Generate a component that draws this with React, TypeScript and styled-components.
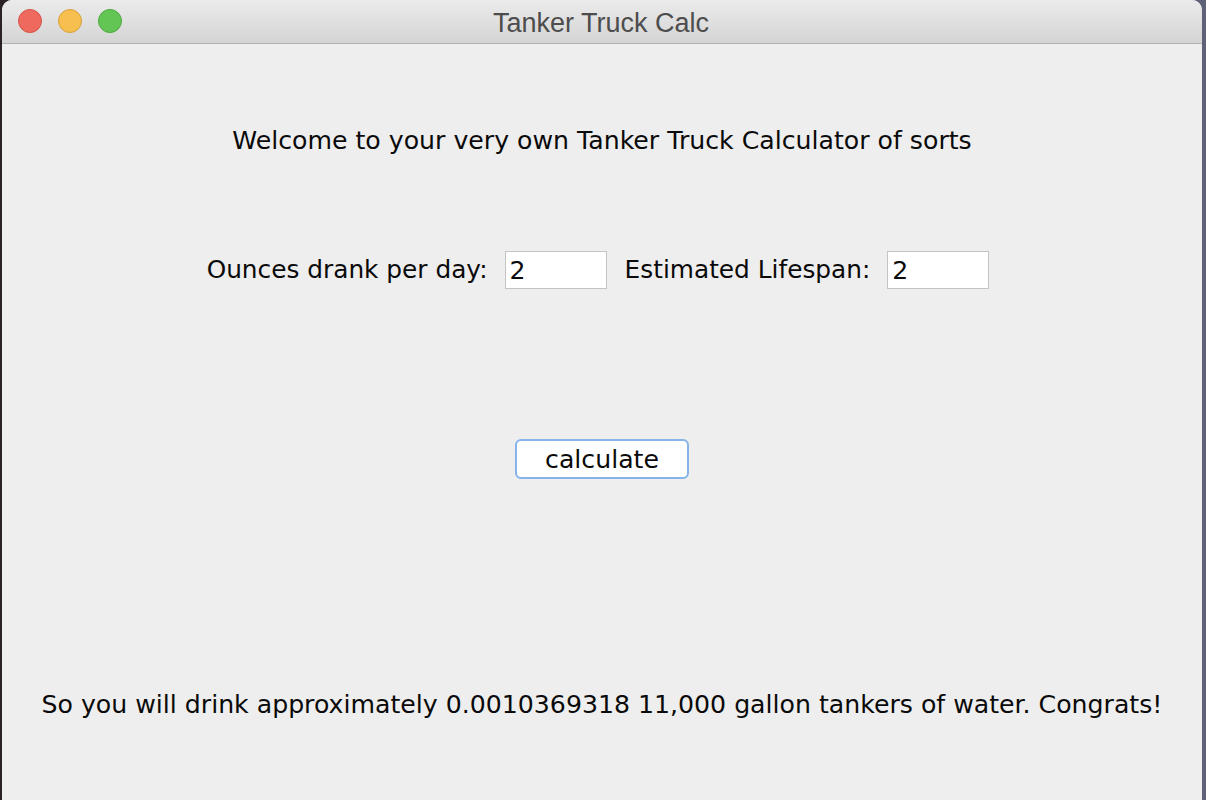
import React from "react";
import styled, { createGlobalStyle } from "styled-components";

const GlobalStyle = createGlobalStyle`
  html, body {
    margin: 0;
    padding: 0;
    height: 100%;
    overflow: hidden;
  }
  body {
    background: linear-gradient(90deg, #2a2226 0, #2a2226 50%, #5f6179 50%);
    font-family: "DejaVu Sans", "Noto Sans", sans-serif;
  }
`;

const Desktop = styled.div`
  height: 800px;
  display: flex;
  padding: 0 4px 0 2px;
`;

const Window = styled.div`
  flex: 1;
  display: flex;
  flex-direction: column;
  background: #eeeeee;
  border-radius: 10px 10px 0 0;
  overflow: hidden;
`;

const TitleBar = styled.div`
  height: 43px;
  flex-shrink: 0;
  position: relative;
  display: flex;
  align-items: center;
  justify-content: center;
  background: linear-gradient(#ebebeb, #d4d4d4);
  border-bottom: 1px solid #b1b1b1;
`;

const Lights = styled.div`
  position: absolute;
  left: 16px;
  top: 9px;
  display: flex;
  gap: 16px;
`;

const Light = styled.span<{ $fill: string; $edge: string }>`
  width: 22px;
  height: 22px;
  border-radius: 50%;
  background: ${(p) => p.$fill};
  border: 1px solid ${(p) => p.$edge};
`;

const Title = styled.div`
  font-size: 27px;
  color: #4d4d4d;
  font-family: "Liberation Sans", "Noto Sans", sans-serif;
  margin: 3px 2px 0 0;
`;

const Body = styled.div`
  flex: 1;
  display: flex;
  flex-direction: column;
  align-items: center;
  color: #0a0a0a;
  font-size: 25.2px;
`;

const Heading = styled.div`
  line-height: 30px;
  margin-top: 82px;
`;

const Row = styled.div`
  margin: 95px 8px 0 0;
  height: 38px;
  display: flex;
  align-items: center;
`;

const Label = styled.label`
  font-size: 24.8px;
  line-height: 30px;
  margin-right: 17px;
`;

const Field = styled.input`
  box-sizing: border-box;
  width: 102px;
  height: 38px;
  margin-right: 18px;
  padding: 0 4px;
  border: 1px solid #c4c4c4;
  background: #ffffff;
  font: inherit;
  color: #0a0a0a;
  outline: none;

  &:last-child {
    margin-right: 0;
  }
`;

const Button = styled.button`
  margin-top: 150px;
  box-sizing: border-box;
  width: 174px;
  height: 40px;
  border: 2px solid #84b4ea;
  border-radius: 6px;
  background: #ffffff;
  font: inherit;
  color: #0a0a0a;
  padding: 0;
`;

const Result = styled.div`
  margin-top: 211px;
  line-height: 30px;
`;

export default function App() {
  return (
    <>
      <GlobalStyle />
      <Desktop>
        <Window>
          <TitleBar>
            <Lights>
              <Light $fill="#ee6a5f" $edge="#d4534a" />
              <Light $fill="#f6bf4f" $edge="#d7a13f" />
              <Light $fill="#62c554" $edge="#4ea83f" />
            </Lights>
            <Title>Tanker Truck Calc</Title>
          </TitleBar>
          <Body>
            <Heading>Welcome to your very own Tanker Truck Calculator of sorts</Heading>
            <Row>
              <Label>Ounces drank per day:</Label>
              <Field defaultValue="2" />
              <Label>Estimated Lifespan:</Label>
              <Field defaultValue="2" />
            </Row>
            <Button>calculate</Button>
            <Result>
              So you will drink approximately 0.0010369318 11,000 gallon tankers of water. Congrats!
            </Result>
          </Body>
        </Window>
      </Desktop>
    </>
  );
}
